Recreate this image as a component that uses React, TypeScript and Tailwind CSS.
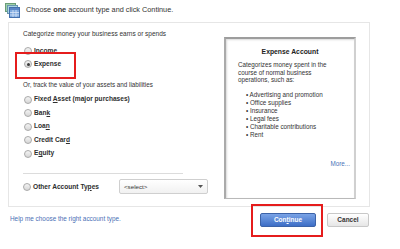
import React from "react";

function Radio({ checked = false }: { checked?: boolean }) {
  return (
    <span className="w-[8px] h-[8px] rounded-full border border-[#a9a9a9] bg-gradient-to-b from-[#f4f4f4] to-[#d6d6d6] flex items-center justify-center shrink-0">
      {checked && <span className="w-[3px] h-[3px] rounded-full bg-[#3a3a3a]" />}
    </span>
  );
}

function Row({ children, checked, h = "h-[13.5px]" }: { children: React.ReactNode; checked?: boolean; h?: string }) {
  return (
    <div className={`flex items-center ${h} gap-[2px] pl-[1px]`}>
      <Radio checked={checked} />
      <span className="font-bold text-[6.6px] text-[#2e2e2e] leading-none">{children}</span>
    </div>
  );
}

function AppIcon() {
  return (
    <svg width="15" height="15" viewBox="0 0 15 15">
      <rect x="0.5" y="0.5" width="10" height="8" fill="#9fd0a8" stroke="#6a9c78" strokeWidth="1" />
      <rect x="2.5" y="2.5" width="10" height="8" fill="#a9d3e3" stroke="#6796ad" strokeWidth="1" />
      <rect x="4.5" y="4.5" width="10" height="10" fill="#7ea9df" stroke="#4470ad" strokeWidth="1" />
      <rect x="5" y="5" width="9" height="2" fill="#5b86c6" />
      <line x1="5" y1="9.5" x2="14" y2="9.5" stroke="#d8e6f7" strokeWidth="0.8" />
      <line x1="5" y1="12" x2="14" y2="12" stroke="#d8e6f7" strokeWidth="0.8" />
      <line x1="8" y1="7" x2="8" y2="14" stroke="#d8e6f7" strokeWidth="0.8" />
      <line x1="11" y1="7" x2="11" y2="14" stroke="#d8e6f7" strokeWidth="0.8" />
    </svg>
  );
}

export default function App() {
  return (
    <div
      className="w-[400px] h-[249px] bg-white overflow-hidden relative text-[#333]"
      style={{ fontFamily: '"Liberation Sans", Arial, sans-serif' }}
    >
      {/* header */}
      <div className="flex items-center h-[20px] pl-[5px] pt-[1px]">
        <AppIcon />
        <span className="ml-[6px] text-[7.3px] text-[#333]">
          Choose <b className="font-bold">one</b> account type and click Continue.
        </span>
      </div>

      {/* main panel */}
      <div className="ml-[8px] mt-[2px] w-[362px] h-[185px] border border-[#e6e6e6] flex">
        {/* left column */}
        <div className="w-[214px] pl-[14px] flex flex-col">
          <div className="h-[12px] mt-[5px] flex items-center text-[6.5px] text-[#333]">
            Categorize money your business earns or spends
          </div>
          <div className="mt-[4.5px]">
            <Row h="h-[13px]">Income</Row>
          </div>
          <div className="relative">
            <Row h="h-[13px]" checked>
              Expense
            </Row>
            <div className="absolute left-[-8px] top-[-6px] w-[61px] h-[27px] border-2 border-[#e51c1c]" />
          </div>
          <div className="h-[12px] mt-[8.5px] flex items-center text-[6.3px] text-[#333]">
            Or, track the value of your assets and liabilities
          </div>
          <div className="mt-[2px]">
            <Row>
              Fixed <u>A</u>sset (major purchases)
            </Row>
            <Row>
              Ban<u>k</u>
            </Row>
            <Row>
              Loa<u>n</u>
            </Row>
            <Row>
              Credit Car<u>d</u>
            </Row>
            <Row>
              E<u>q</u>uity
            </Row>
          </div>
          <div className="mt-[12px] h-px w-[160px] bg-[#dcdcdc]" />
          <div className="mt-[5px] h-[16px] flex items-center">
            <Radio />
            <span className="ml-[2px] font-bold text-[6.6px] text-[#2e2e2e] w-[86px]">
              Other Account Ty<u>p</u>es
            </span>
            <div className="w-[89px] h-[15px] border border-[#cfcfcf] rounded-[2px] bg-gradient-to-b from-white to-[#f1f1f1] flex items-center justify-between px-[4px]">
              <span className="text-[6.2px] text-[#333]">&lt;select&gt;</span>
              <svg width="5" height="3" viewBox="0 0 5 3">
                <path d="M0 0 L5 0 L2.5 3 Z" fill="#555" />
              </svg>
            </div>
          </div>
        </div>

        {/* right info box */}
        <div className="mt-[14px] ml-[1px] w-[132px] h-[162px] border border-[#b9b9b9] border-t-[2px] border-t-[#9d9d9d] border-l-[2px] border-l-[#aaaaaa] border-r-[2px] border-r-[#d0d0d0] bg-white shadow-[inset_1px_1px_2px_rgba(0,0,0,0.15)] flex flex-col relative">
          <div className="mt-[8px] text-center font-bold text-[6.8px] text-[#222] leading-[9px]">
            Expense Account
          </div>
          <div className="mt-[5px] pl-[12px] text-[6.3px] leading-[7.7px] text-[#333]">
            Categorizes money spent in the
            <br />
            course of normal business
            <br />
            operations, such as:
          </div>
          <div className="mt-[7px] pl-[20px] text-[6.3px] leading-[8px] text-[#333]">
            <div>• Advertising and promotion</div>
            <div>• Office supplies</div>
            <div>• Insurance</div>
            <div>• Legal fees</div>
            <div>• Charitable contributions</div>
            <div>• Rent</div>
          </div>
          <div className="mt-auto mb-[30px] pr-[4px] text-right text-[6.3px] text-[#4a72b8]">More...</div>
        </div>
      </div>

      {/* bottom */}
      <div className="flex items-center mt-[5px] h-[16px]">
        <span className="ml-[10px] text-[6.4px] text-[#4a6fb5] mt-[-3px]">Help me choose the right account type.</span>
        <div className="ml-auto mr-[31px] flex items-center gap-[11px]">
          <div className="relative">
            <button className="w-[56px] h-[14px] rounded-[2px] border border-[#3c63a8] bg-gradient-to-b from-[#7aa3e6] to-[#3d6ec6] text-white font-bold text-[6.5px] flex items-center justify-center">
              Con<u>t</u>inue
            </button>
            <div className="absolute left-[-9px] top-[-9px] w-[72px] h-[33px] border-2 border-[#e51c1c]" />
          </div>
          <button className="w-[42px] h-[14px] rounded-[2px] border border-[#c8c8c8] bg-gradient-to-b from-white to-[#e6e6e6] text-[#333] font-bold text-[6.5px] flex items-center justify-center">
            Cancel
          </button>
        </div>
      </div>
    </div>
  );
}
